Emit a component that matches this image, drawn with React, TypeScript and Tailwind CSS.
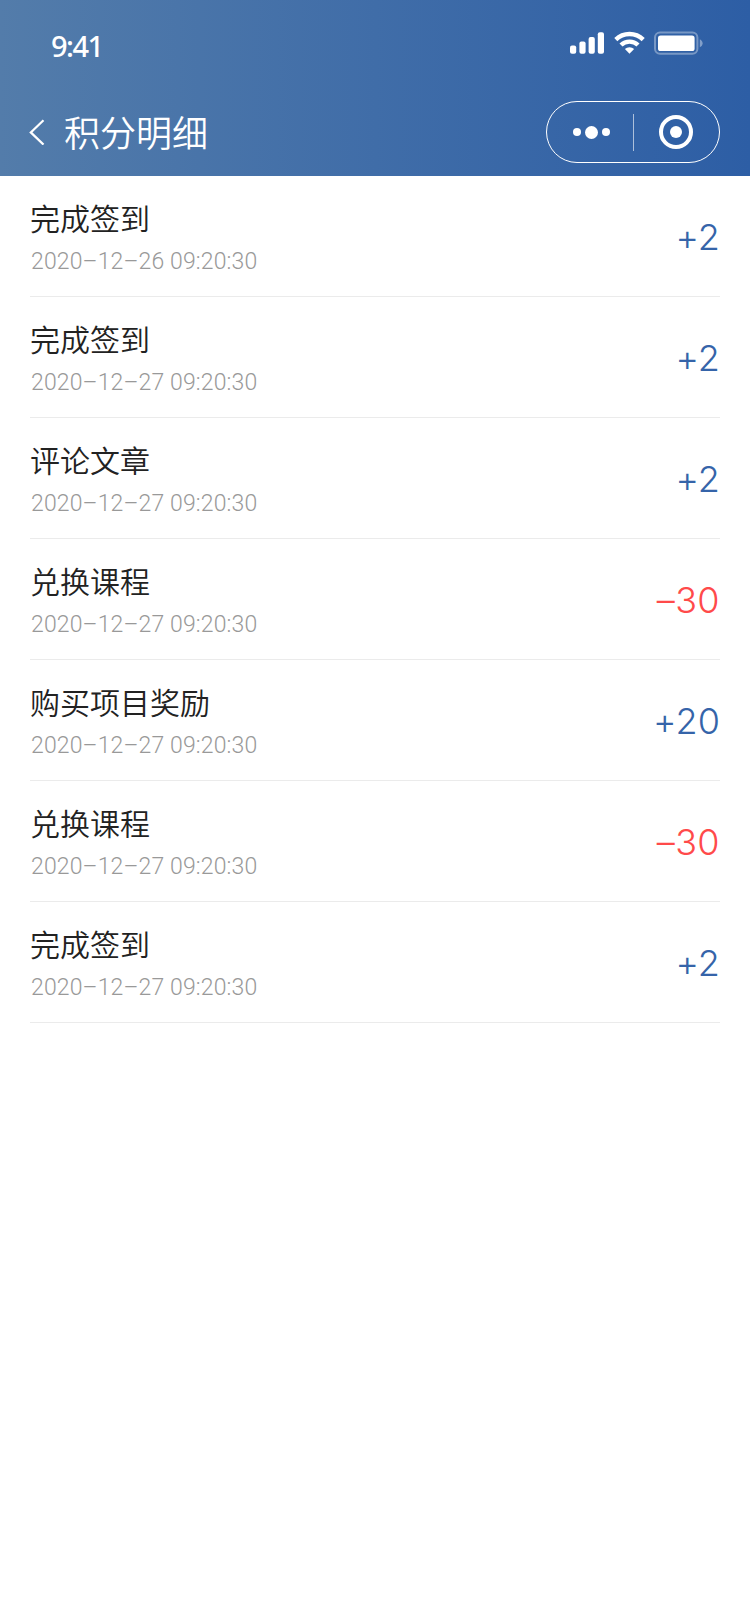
type Entry = { title: string; time: string; amount: string; spent?: boolean };

const entries: Entry[] = [
  { title: '完成签到', time: '2020–12–26 09:20:30', amount: '+2' },
  { title: '完成签到', time: '2020–12–27 09:20:30', amount: '+2' },
  { title: '评论文章', time: '2020–12–27 09:20:30', amount: '+2' },
  { title: '兑换课程', time: '2020–12–27 09:20:30', amount: '–30', spent: true },
  { title: '购买项目奖励', time: '2020–12–27 09:20:30', amount: '+20' },
  { title: '兑换课程', time: '2020–12–27 09:20:30', amount: '–30', spent: true },
  { title: '完成签到', time: '2020–12–27 09:20:30', amount: '+2' },
];

function SignalIcon() {
  return (
    <svg width="35" height="23" viewBox="0 0 35 23" fill="#fff">
      <rect x="0" y="14.6" width="6.2" height="8.2" rx="2" />
      <rect x="9.4" y="10.6" width="6.2" height="12.2" rx="2" />
      <rect x="18.6" y="6" width="6.2" height="16.8" rx="2" />
      <rect x="27.8" y="1.2" width="6.2" height="21.6" rx="2" />
    </svg>
  );
}

function WifiIcon() {
  return (
    <svg width="31" height="23" viewBox="0 0 31 23" fill="none" stroke="#fff" strokeWidth="4.4">
      <path d="M1.8 8.6A19.6 19.6 0 0 1 29.2 8.6" />
      <path d="M7 14A12.3 12.3 0 0 1 24 14" />
      <path d="M15.5 22.8L10.9 18A6.6 6.6 0 0 1 20.1 18Z" fill="#fff" stroke="none" />
    </svg>
  );
}

function BatteryIcon() {
  return (
    <svg width="49" height="24" viewBox="0 0 49 24" fill="none">
      <rect x="1" y="1.6" width="42.4" height="21.2" rx="5" stroke="#fff" strokeOpacity="0.35" strokeWidth="2" />
      <rect x="4" y="4.4" width="36.6" height="15.6" rx="2.6" fill="#fff" />
      <path d="M45.8 8.2C47.5 9 48.6 10.4 48.6 12.2S47.5 15.4 45.8 16.2Z" fill="#fff" fillOpacity="0.4" />
    </svg>
  );
}

function Header() {
  return (
    <header className="flex h-44 flex-col bg-linear-to-r from-[#537caa] via-[#406da8] to-[#2d5ea5] text-white">
      <div className="flex h-[88px] items-start justify-between pr-[47px] pl-[51px]">
        <span className="mt-[27px] font-['Noto_Sans',sans-serif] text-[29px] leading-[38px] font-medium tracking-[-1.5px]">9:41</span>
        <div className="mt-[31px] flex gap-[9px]">
          <SignalIcon />
          <WifiIcon />
          <BatteryIcon />
        </div>
      </div>
      <div className="flex h-[88px] items-center justify-between pr-[30px] pl-[29px]">
        <div className="flex items-center">
          <svg width="16" height="26" viewBox="0 0 16 26" fill="none" stroke="#fff" strokeWidth="2.2">
            <path d="M14.5 1.2L1.8 13.4L14.5 25.6" />
          </svg>
          <h1 className="-mt-0.5 ml-[19px] text-[36px] leading-[50px] font-[350]">积分明细</h1>
        </div>
        <div className="flex h-[62px] w-[174px] items-center rounded-full border border-white">
          <div className="flex w-[86px] items-center justify-center gap-1 pl-[3px]">
            <i className="size-2 rounded-full bg-white" />
            <i className="size-[13px] rounded-full bg-white" />
            <i className="size-2 rounded-full bg-white" />
          </div>
          <i className="h-[37px] w-px bg-white/60" />
          <div className="flex flex-1 justify-center pr-px">
            <div className="flex size-[34px] items-center justify-center rounded-full border-4 border-white">
              <i className="size-3 rounded-full bg-white" />
            </div>
          </div>
        </div>
      </div>
    </header>
  );
}

function EntryRow({ title, time, amount, spent }: Entry) {
  return (
    <li className="flex h-[121px] items-center justify-between border-b border-[#ebebeb]">
      <div className="flex flex-col pt-1 pl-px">
        <span className="-ml-px text-[30px] leading-[41px] font-[350] text-[#222222]">{title}</span>
        <span className="pt-1.5 font-['Roboto',sans-serif] text-[23px] leading-[36px] font-light tracking-[0.13px] text-[#999999]">{time}</span>
      </div>
      <span
        className={
          spent
            ? "mt-px font-['Inter',sans-serif] text-[36px] leading-[50px] font-light tracking-[0.4px] text-[#ff4a4a] [font-feature-settings:'calt'_0]"
            : "mt-px font-['Inter',sans-serif] text-[36px] leading-[50px] font-light tracking-[0.1px] text-[#3564a9] [font-feature-settings:'calt'_0]"
        }
      >
        {amount}
      </span>
    </li>
  );
}

export default function App() {
  return (
    <div className="min-h-[1624px] w-[750px] bg-white font-['Noto_Sans_CJK_SC',sans-serif]">
      <Header />
      <ul className="px-[30px]">
        {entries.map((entry, index) => (
          <EntryRow key={index} {...entry} />
        ))}
      </ul>
    </div>
  );
}
